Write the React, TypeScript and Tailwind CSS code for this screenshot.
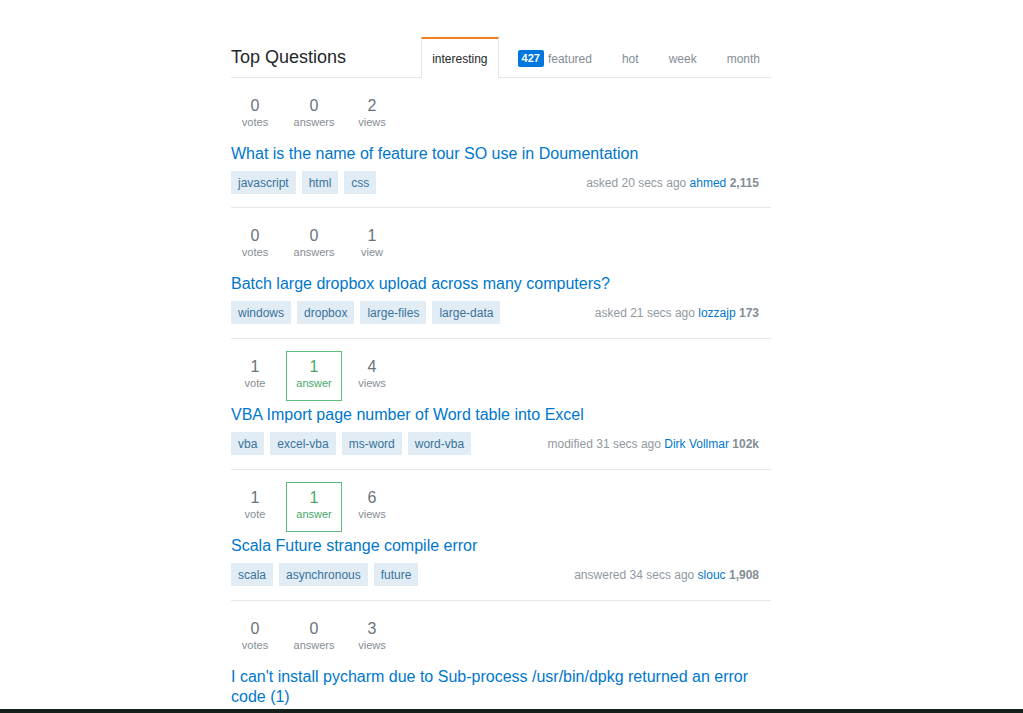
import React from 'react';

type Question = {
  votes: number;
  answers: number;
  views: number;
  answered?: boolean;
  title: string;
  tags: string[];
  action?: string;
  user?: string;
  rep?: string;
};

const questions: Question[] = [
  {
    votes: 0,
    answers: 0,
    views: 2,
    title: 'What is the name of feature tour SO use in Doumentation',
    tags: ['javascript', 'html', 'css'],
    action: 'asked 20 secs ago',
    user: 'ahmed',
    rep: '2,115',
  },
  {
    votes: 0,
    answers: 0,
    views: 1,
    title: 'Batch large dropbox upload across many computers?',
    tags: ['windows', 'dropbox', 'large-files', 'large-data'],
    action: 'asked 21 secs ago',
    user: 'lozzajp',
    rep: '173',
  },
  {
    votes: 1,
    answers: 1,
    views: 4,
    answered: true,
    title: 'VBA Import page number of Word table into Excel',
    tags: ['vba', 'excel-vba', 'ms-word', 'word-vba'],
    action: 'modified 31 secs ago',
    user: 'Dirk Vollmar',
    rep: '102k',
  },
  {
    votes: 1,
    answers: 1,
    views: 6,
    answered: true,
    title: 'Scala Future strange compile error',
    tags: ['scala', 'asynchronous', 'future'],
    action: 'answered 34 secs ago',
    user: 'slouc',
    rep: '1,908',
  },
  {
    votes: 0,
    answers: 0,
    views: 3,
    title: "I can't install pycharm due to Sub-process /usr/bin/dpkg returned an error code (1)",
    tags: ['python', 'ubuntu'],
    action: 'asked 40 secs ago',
    user: 'user',
    rep: '1',
  },
];

const plural = (n: number, word: string) => (n === 1 ? word : word + 's');

const Stat = ({ n, label, className }: { n: number; label: string; className: string }) => (
  <div className={`flex flex-col items-center h-[50px] pt-[7px] ${className}`}>
    <span className="text-[16px] leading-[18px] text-[#6a737c]">{n}</span>
    <span className="text-[11px] leading-[14px] text-[#848d95]">{label}</span>
  </div>
);

const Row = ({ q, first }: { q: Question; first: boolean }) => (
  <div className={`border-t border-[#e4e6e8] pt-[12px] ${first ? 'pb-[13px]' : 'pb-[14px]'}`}>
    <div className="flex">
      <Stat n={q.votes} label={plural(q.votes, 'vote')} className="w-[48px]" />
      {q.answered ? (
        <div className="ml-[7px] w-[56px] h-[50px] pt-[6px] border border-[#5eba7d] flex flex-col items-center">
          <span className="text-[16px] leading-[18px] text-[#48a868]">{q.answers}</span>
          <span className="text-[11px] leading-[14px] text-[#48a868]">answer</span>
        </div>
      ) : (
        <Stat n={q.answers} label={plural(q.answers, 'answer')} className="ml-[7px] w-[56px]" />
      )}
      <Stat n={q.views} label={plural(q.views, 'view')} className="ml-[6px] w-[48px]" />
    </div>
    <a href="#" className="block mt-[4px] text-[16px] leading-[20px] text-[#0077cc] pr-[12px]">
      {q.title}
    </a>
    <div className="flex items-center justify-between mt-[7px]">
      <div className="flex gap-[6px]">
        {q.tags.map((t) => (
          <span
            key={t}
            className="h-[23px] px-[7px] flex items-center bg-[#e1ecf4] text-[#39739d] text-[12px]"
          >
            {t}
          </span>
        ))}
      </div>
      <div className="pr-[12px] text-[12px] text-[#9199a1] whitespace-nowrap">
        {q.action} <a href="#" className="text-[#0077cc]">{q.user}</a>{' '}
        <span className="font-bold text-[#848d95]">{q.rep}</span>
      </div>
    </div>
  </div>
);

const tabs = ['interesting', 'featured', 'hot', 'week', 'month'];

export default function App() {
  return (
    <div
      className="h-[713px] flex flex-col bg-white overflow-hidden"
      style={{ fontFamily: '"Liberation Sans", Arial, sans-serif' }}
    >
      <div className="flex-1 overflow-hidden">
        <div className="ml-[231px] w-[540px] mt-[37px]">
          <div className="flex items-end h-[41px]">
            <h1 className="text-[18px] leading-[22px] text-[#242729] mb-[10px]">Top Questions</h1>
            <div className="ml-auto flex gap-[8px] h-full">
              {tabs.map((t, i) => (
                <a
                  key={t}
                  href="#"
                  className={
                    i === 0
                      ? 'relative z-10 h-[41px] px-[10px] flex items-center border-t-2 border-t-[#f48024] border-x border-x-[#e4e6e8] bg-white text-[12px] text-[#242729]'
                      : 'h-[41px] px-[11px] flex items-center text-[12px] text-[#848d95] pt-[2px]'
                  }
                >
                  {t === 'featured' && (
                    <span className="mr-[4px] px-[4px] h-[17px] flex items-center rounded-[2px] bg-[#0077dd] text-white text-[11px] font-bold">
                      427
                    </span>
                  )}
                  {t}
                </a>
              ))}
            </div>
          </div>
          <div className="-mt-px">
            {questions.map((q, i) => (
              <Row key={i} q={q} first={i === 0} />
            ))}
          </div>
        </div>
      </div>
      <div className="h-[4px] bg-[#15201b]" />
    </div>
  );
}
